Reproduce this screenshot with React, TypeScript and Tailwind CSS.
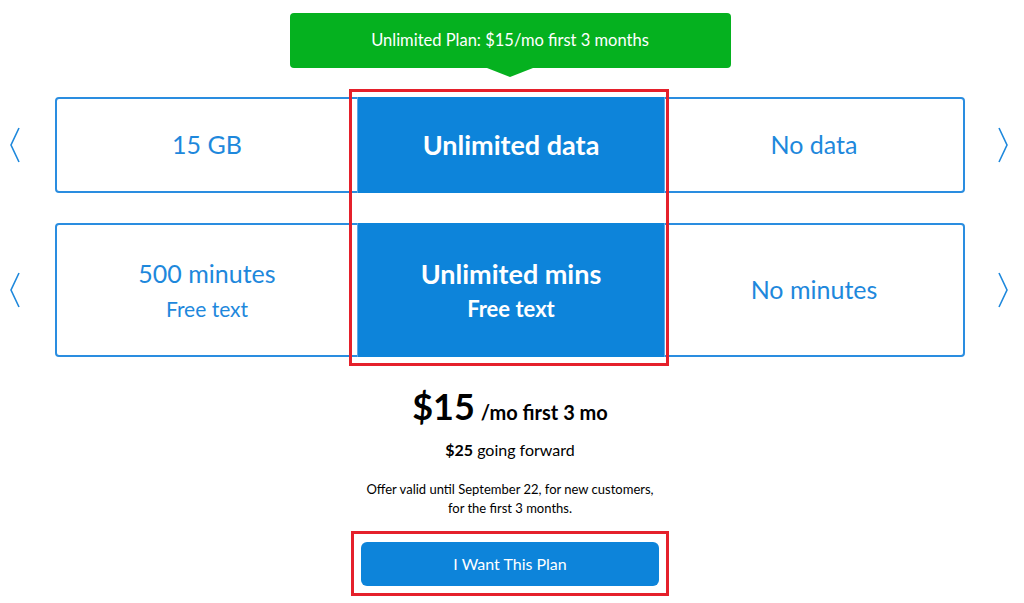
const Chevron = ({ dir }: { dir: "left" | "right" }) => (
  <svg width="12" height="36" viewBox="0 0 12 36" fill="none" stroke="#1e88dc" strokeWidth="1.6">
    {dir === "left" ? <path d="M10 1 L2 18 L10 35" /> : <path d="M2 1 L10 18 L2 35" />}
  </svg>
)

const App = () => {
  return (
    <div className="relative w-[1024px] h-[603px] bg-white overflow-hidden font-['Lato',sans-serif]">
      {/* Offer banner */}
      <div className="flex flex-col items-center pt-[13px] ml-[-4px]">
        <div className="w-[441px] h-[55px] rounded-[4px] bg-[#05b11f] flex items-center justify-center text-white text-[16.5px]">
          Unlimited Plan: $15/mo first 3 months
        </div>
        <div className="w-0 h-0 border-l-[23px] border-r-[23px] border-t-[9px] border-l-transparent border-r-transparent border-t-[#05b11f]" />
      </div>

      {/* Plan rows */}
      <div className="mt-[20px] flex flex-col gap-[30px]">
        <div className="flex items-center">
          <div className="w-[55px] flex justify-start pl-[9px]">
            <Chevron dir="left" />
          </div>
          <div className="w-[910px] h-[96px] flex border-2 border-[#2a8de0] rounded-[4px]">
            <div className="w-[300px] flex items-center justify-center text-[#1e88dc] text-[25px]">15 GB</div>
            <div className="w-[308px] -my-[2px] bg-[#0d84da] border-x border-[#5fa9e6] flex items-center justify-center text-white text-[27px] font-bold">
              Unlimited data
            </div>
            <div className="flex-1 flex items-center justify-center text-[#1e88dc] text-[25px]">No data</div>
          </div>
          <div className="w-[59px] flex justify-end pr-[15px]">
            <Chevron dir="right" />
          </div>
        </div>

        <div className="flex items-center">
          <div className="w-[55px] flex justify-start pl-[9px]">
            <Chevron dir="left" />
          </div>
          <div className="w-[910px] h-[134px] flex border-2 border-[#2a8de0] rounded-[4px]">
            <div className="w-[300px] flex flex-col items-center justify-center text-[#1e88dc] leading-tight">
              <span className="text-[25px]">500 minutes</span>
              <span className="text-[21px] mt-[6px]">Free text</span>
            </div>
            <div className="w-[308px] -my-[2px] bg-[#0d84da] border-x border-[#5fa9e6] flex flex-col items-center justify-center text-white font-bold leading-tight">
              <span className="text-[27px]">Unlimited mins</span>
              <span className="text-[22px] mt-[4px]">Free text</span>
            </div>
            <div className="flex-1 flex items-center justify-center text-[#1e88dc] text-[25px]">No minutes</div>
          </div>
          <div className="w-[59px] flex justify-end pr-[15px]">
            <Chevron dir="right" />
          </div>
        </div>
      </div>

      {/* Price */}
      <div className="flex flex-col items-center ml-[-4px] text-black">
        <div className="mt-[31px] flex items-baseline gap-[6px]">
          <span className="text-[36px] font-bold leading-none">$15</span>
          <span className="text-[20px] font-bold">/mo first 3 mo</span>
        </div>
        <div className="mt-[11px] text-[16px]">
          <span className="font-bold">$25</span> going forward
        </div>
        <div className="mt-[18px] text-[13px] leading-[19px] text-center">
          Offer valid until September 22, for new customers,
          <br />
          for the first 3 months.
        </div>
        <button className="mt-[24px] w-[298px] h-[44px] rounded-[6px] bg-[#0d84da] text-white text-[16px]">
          I Want This Plan
        </button>
      </div>

      {/* Annotation outlines */}
      <div className="absolute left-[349px] top-[89px] w-[320px] h-[277px] border-[3px] border-[#e5202b] pointer-events-none" />
      <div className="absolute left-[351px] top-[531px] w-[318px] h-[65px] border-[3px] border-[#e5202b] pointer-events-none" />
    </div>
  )
}

export default App
